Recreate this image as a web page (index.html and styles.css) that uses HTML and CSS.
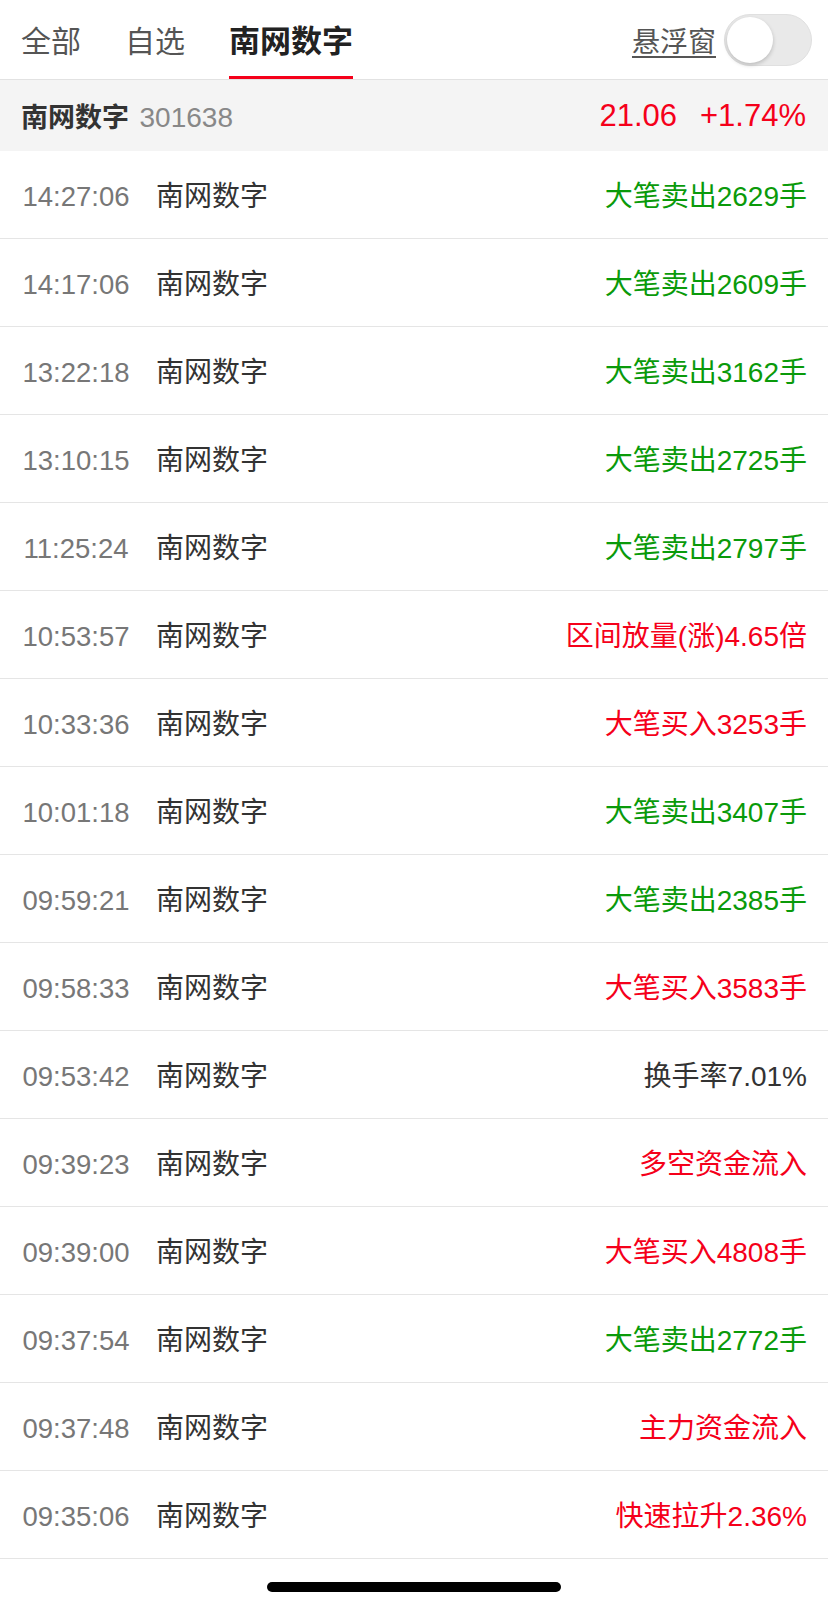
FILE: index.html
```html
<!DOCTYPE html>
<html lang="zh-CN">
<head>
  <meta charset="UTF-8" />
  <meta name="viewport" content="width=device-width, initial-scale=1.0"/>
  <title>异动 - 南网数字</title>
  <link rel="stylesheet" href="styles.css">
</head>
<body>
  <header class="top">
    <nav class="tabs">
      <a class="tab">全部</a>
      <a class="tab">自选</a>
      <a class="tab active">南网数字</a>
    </nav>
    <div class="float-ctrl">
      <span class="float-label">悬浮窗</span>
      <span class="switch"><span class="knob"></span></span>
    </div>
  </header>

  <div class="stock-bar">
    <div class="stock-name">南网数字 <span class="code">301638</span></div>
    <div class="stock-quote">
      <span>21.06</span>
      <span>+1.74%</span>
    </div>
  </div>

  <ul class="list" id="list">
    <!-- rows are filled in below -->
  </ul>

  <div class="home-bar"></div>

  <script>
    const rows = [
      ['14:27:06', '大笔卖出2629手', 'down'],
      ['14:17:06', '大笔卖出2609手', 'down'],
      ['13:22:18', '大笔卖出3162手', 'down'],
      ['13:10:15', '大笔卖出2725手', 'down'],
      ['11:25:24', '大笔卖出2797手', 'down'],
      ['10:53:57', '区间放量(涨)4.65倍', 'up'],
      ['10:33:36', '大笔买入3253手', 'up'],
      ['10:01:18', '大笔卖出3407手', 'down'],
      ['09:59:21', '大笔卖出2385手', 'down'],
      ['09:58:33', '大笔买入3583手', 'up'],
      ['09:53:42', '换手率7.01%', 'flat'],
      ['09:39:23', '多空资金流入', 'up'],
      ['09:39:00', '大笔买入4808手', 'up'],
      ['09:37:54', '大笔卖出2772手', 'down'],
      ['09:37:48', '主力资金流入', 'up'],
      ['09:35:06', '快速拉升2.36%', 'up']
    ];

    let html = '';
    rows.forEach(r => {
      html += `
        <li class="row">
          <span class="time">${r[0]}</span>
          <span class="name">南网数字</span>
          <span class="event ${r[2]}">${r[1]}</span>
        </li>`;
    });
    document.getElementById('list').innerHTML = html;
  </script>
</body>
</html>
```

FILE: styles.css
```css
body {
  margin: 0;
  font-family: 'Liberation Sans', 'Noto Sans CJK SC', sans-serif;
  background: #fff;
  color: #333;
  height: 1608px;
  overflow: hidden;
}
.top {
  height: 79px;
  border-bottom: 1px solid #e2e2e2;
  display: flex;
  justify-content: space-between;
  align-items: center;
  padding: 0 16px 0 21px;
}
.tabs {
  display: flex;
  gap: 44px;
  height: 100%;
}
.tab {
  box-sizing: border-box;
  height: 100%;
  display: flex;
  align-items: center;
  padding-top: 1px;
  border-bottom: 3px solid transparent;
  font-size: 30px;
  color: #555;
}
.tab.active {
  font-size: 31px;
  font-weight: bold;
  color: #222;
  border-bottom-color: #f5001a;
}
.float-ctrl {
  display: flex;
  align-items: center;
  gap: 8px;
}
.float-label {
  font-size: 28px;
  color: #555;
  text-decoration: underline;
  text-underline-offset: 4px;
}
.switch {
  width: 88px;
  height: 52px;
  box-sizing: border-box;
  border-radius: 26px;
  background: #e9e9e9;
  border: 1px solid #e0e0e0;
  display: flex;
  align-items: center;
  padding-left: 2px;
}
.knob {
  width: 46px;
  height: 46px;
  border-radius: 50%;
  background: #fff;
  box-shadow: 0 2px 4px rgba(0,0,0,0.2);
}
.stock-bar {
  height: 71px;
  background: #f4f4f4;
  display: flex;
  justify-content: space-between;
  align-items: center;
  padding: 0 22px 0 21px;
}
.stock-name {
  font-size: 27px;
  font-weight: bold;
  color: #333;
}
.stock-name .code {
  font-size: 28px;
  font-weight: normal;
  color: #888;
  margin-left: 3px;
}
.stock-quote {
  display: flex;
  gap: 23px;
  font-size: 31px;
  color: #f5001a;
}
.list {
  list-style: none;
  margin: 0;
  padding: 0;
}
.row {
  height: 83px;
  padding-top: 4px;
  line-height: 83px;
  border-bottom: 1px solid #e5e5e5;
  display: flex;
  align-items: baseline;
  padding-right: 21px;
}
.time {
  width: 128px;
  margin: 0 16px 0 12px;
  text-align: center;
  font-size: 27.5px;
  color: #777;
}
.name {
  font-size: 28px;
  color: #333;
}
.event {
  margin-left: auto;
  font-size: 28px;
}
.event.down {
  color: #0a9a0a;
}
.event.up {
  color: #f5001a;
}
.event.flat {
  color: #333;
}
.home-bar {
  width: 294px;
  height: 10px;
  border-radius: 5px;
  background: #000;
  margin: 23px auto 0;
}
```
